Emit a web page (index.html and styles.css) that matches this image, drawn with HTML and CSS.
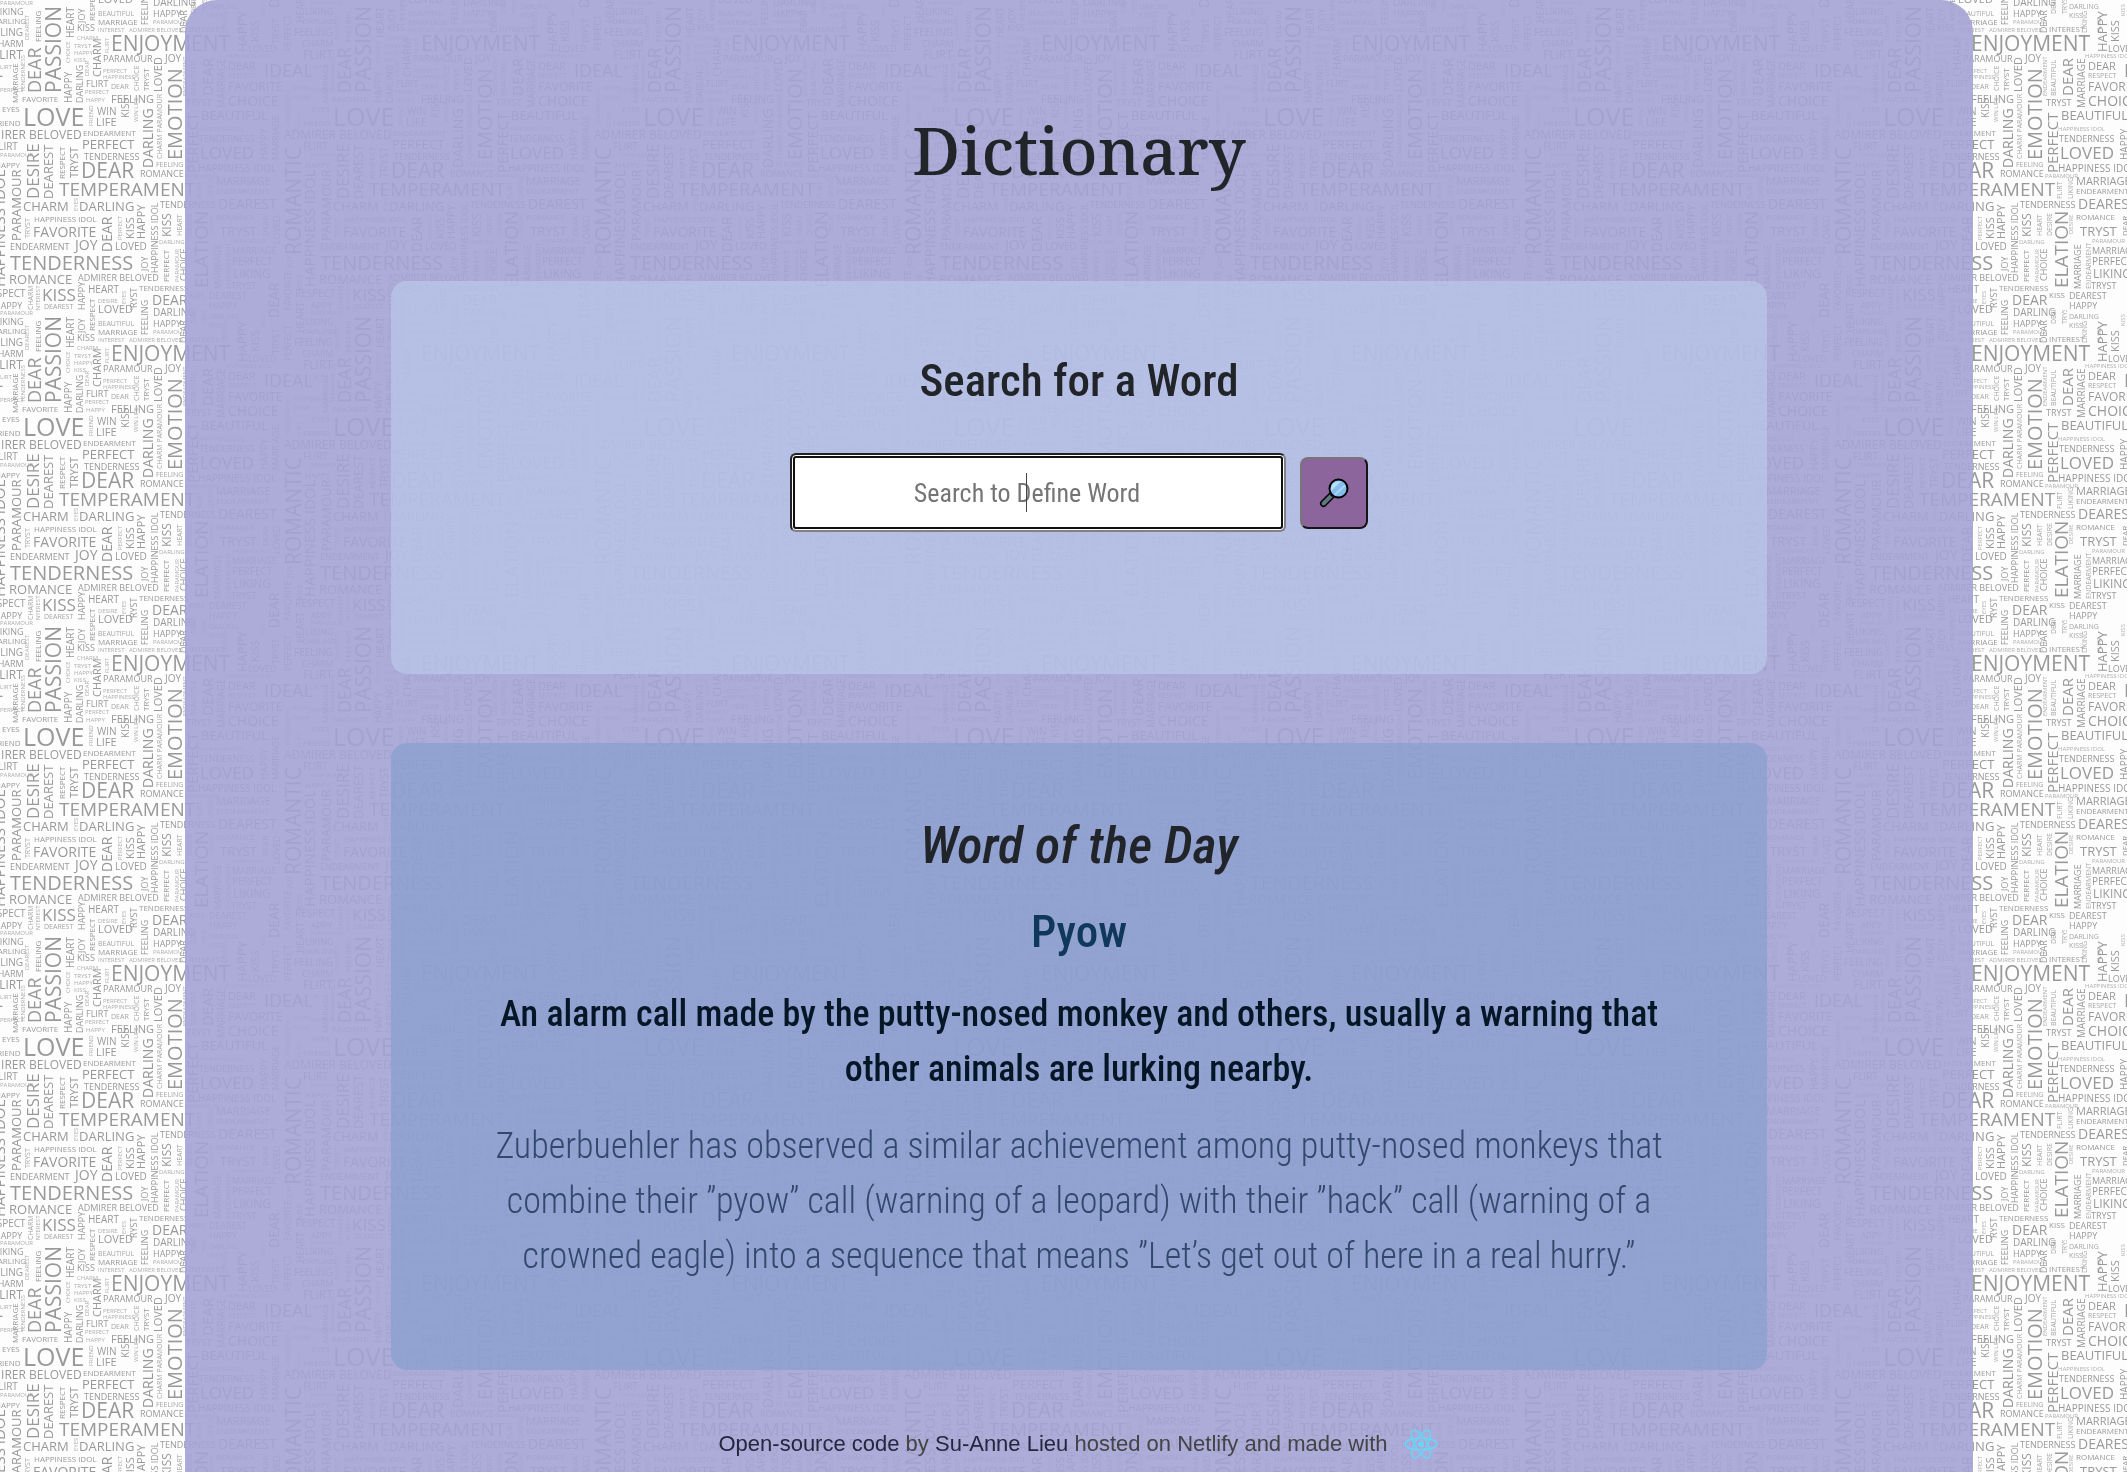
FILE: index.html
```html
<!DOCTYPE html>
<html lang="en">
<head>
<meta charset="utf-8">
<meta name="viewport" content="width=device-width, initial-scale=1">
<title>Dictionary</title>
<link rel="stylesheet" href="styles.css">
</head>
<body>
<svg class="wallpaper" aria-hidden="true">
<defs>
<pattern id="words" width="310" height="310" patternUnits="userSpaceOnUse">
<g font-size="25"><text x="23" y="126">LOVE</text></g>
<g font-size="21">
<text x="111" y="51">ENJOYMENT</text><text x="81" y="178">DEAR</text>
<text transform="translate(61 93) rotate(-90)">PASSION</text>
<text transform="translate(301 255) rotate(-90)">ROMANTIC</text>
</g>
<g font-size="20">
<text x="10" y="270">TENDERNESS</text>
<text transform="translate(182 160) rotate(-90)">EMOTION</text>
</g>
<g font-size="19">
<text x="59" y="196">TEMPERAMENT</text>
<text transform="translate(208 288) rotate(-90)">ELATION</text>
</g>
<g font-size="18">
<text x="264" y="77">IDEAL</text><text x="-46" y="77">IDEAL</text>
<text transform="translate(41 93) rotate(-90)">DEAR</text>
</g>
<g font-size="17">
<text x="200" y="159">LOVED</text><text x="42" y="301">KISS</text>
<text transform="translate(39 199) rotate(-90)">DESIRE</text>
</g>
<g font-size="15">
<text transform="translate(5 287) rotate(-90)">HAPPINESS IDOL</text>
<text transform="translate(315 287) rotate(-90)">HAPPINESS IDOL</text>
<text transform="translate(198 173) rotate(-90)">PERFECT</text>
<text transform="translate(213 96) rotate(-90)">DEAR</text>
</g>
<g font-size="14">
<text x="218" y="209">DEAREST</text><text x="228" y="106">CHOICE</text><text x="33" y="237">FAVORITE</text><text x="75" y="250">JOY</text><text x="152" y="305">DEAR</text>
<text transform="translate(153 168) rotate(-90)">DARLING</text>
<text transform="translate(112 252) rotate(-90)">DEAR</text>
<text transform="translate(279 318) rotate(-90)">DEAR</text><text transform="translate(279 8) rotate(-90)">DEAR</text>
</g>
<g font-size="13">
<text x="220" y="236">TRYST</text><text x="201" y="120">BEAUTIFUL</text><text x="23" y="211">CHARM</text><text x="79" y="211">DARLING</text><text x="9" y="284">ROMANCE</text><text x="82" y="149">PERFECT</text>
<text transform="translate(53 199) rotate(-90)">DEAREST</text>
<text transform="translate(21 241) rotate(-90)">PARAMOUR</text>
<text transform="translate(247 52) rotate(-90)">HAPPY</text>
</g>
<g font-size="12">
<text x="233" y="278">LIKING</text><text x="228" y="91">FAVORITE</text><text x="284" y="139">ADMIRER BELOVED</text><text x="-26" y="139">ADMIRER BELOVED</text><text x="303" y="59">FLIRT</text><text x="-7" y="59">FLIRT</text>
<text transform="translate(171 237) rotate(-90)">KISS</text>
</g>
<g font-size="11">
<text x="216" y="185">MARRIAGE</text><text x="111" y="103">FEELING</text><text x="96" y="126">LIFE</text><text x="98" y="3">LOVED</text><text x="98" y="313">LOVED</text><text x="228" y="70">DEAR</text>
<text transform="translate(78 178) rotate(-90)">TRYST</text>
<text transform="translate(259 42) rotate(-90)">KISS</text>
<text transform="translate(101 77) rotate(-90)">CHARM</text>
<text transform="translate(162 92) rotate(-90)">LOVED</text>
<text transform="translate(145 239) rotate(-90)">HAPPY</text>
<text transform="translate(134 239) rotate(-90)">KISS</text>
</g>
<g font-size="10">
<text x="115" y="250">LOVED</text><text x="97" y="115">WIN</text><text x="165" y="62">JOY</text><text x="153" y="6">DARLING</text><text x="153" y="316">DARLING</text><text x="294" y="36">FEELING</text><text x="-16" y="36">FEELING</text><text x="303" y="150">FLIRT</text><text x="-7" y="150">FLIRT</text><text x="-15" y="297">RESPECT</text><text x="295" y="297">RESPECT</text><text x="198" y="172">HAPPINESS IDOL</text><text x="88" y="293">HEART</text><text x="232" y="265">PERFECT</text>
<text transform="translate(225 108) rotate(-90)">MARRIAGE</text>
<text transform="translate(74 38) rotate(-90)">HEART</text>
<text transform="translate(72 103) rotate(-90)">HAPPY</text>
<text transform="translate(129 118) rotate(-90)">KISS</text>
<text transform="translate(268 160) rotate(-90)">HAPPY</text>
<text transform="translate(304 23) rotate(-90)">HEART</text><text transform="translate(304 333) rotate(-90)">HEART</text>
</g>
<g font-size="9">
<text x="10" y="250">ENDEARMENT</text><text x="78" y="281">ADMIRER BELOVED</text><text x="84" y="160">TENDERNESS</text><text x="140" y="177">ROMANCE</text><text x="86" y="87">FLIRT</text><text x="103" y="62">PARAMOUR</text><text x="77" y="31">KISS</text><text x="153" y="17">HAPPY</text><text x="248" y="52">LOVED</text><text x="302" y="47">CHARM</text><text x="-8" y="47">CHARM</text><text x="-5" y="15">LIKING</text><text x="305" y="15">LIKING</text><text x="186" y="106">TRYST</text><text x="199" y="142">TENDERNESS</text><text x="160" y="208">TENDERNESS</text><text x="232" y="254">MARRIAGE</text><text x="231" y="289">TRYST</text><text x="209" y="299">DEAREST</text><text x="209" y="309">HAPPY</text><text x="-6" y="309">HAPPY</text>
<text transform="translate(83 103) rotate(-90)">DARLING</text>
<text transform="translate(148 25) rotate(-90)">FEELING</text><text transform="translate(148 335) rotate(-90)">FEELING</text>
<text transform="translate(158 273) rotate(-90)">HAPPINESS IDOL</text>
<text transform="translate(148 271) rotate(-90)">JOY</text>
<text transform="translate(137 313) rotate(-90)">TRYST</text>
<text transform="translate(187 33) rotate(-90)">DEAR</text>
<text transform="translate(280 244) rotate(-90)">LOVED</text>
<text transform="translate(221 289) rotate(-90)">MARRIAGE</text>
<text transform="translate(279 160) rotate(-90)">MARRIAGE</text>
<text transform="translate(279 44) rotate(-90)">TRYST</text>
<text transform="translate(291 51) rotate(-90)">PERFECT</text>
<text transform="translate(291 311) rotate(-90)">FAVORITE</text>
<text transform="translate(187 281) rotate(-90)">CHOICE</text>
<text transform="translate(85 310) rotate(-90)">HAPPY</text>
<text transform="translate(85 23) rotate(-90)">JOY</text>
</g>
<g font-size="8">
<text x="34" y="222">HAPPINESS IDOL</text><text x="83" y="136">ENDEARMENT</text><text x="22" y="102">FAVORITE</text><text x="98" y="25">MARRIAGE</text><text x="189" y="32">INTEREST</text><text x="2" y="112">EYES</text><text x="-7" y="126">FRIEND</text><text x="303" y="126">FRIEND</text><text x="-5" y="168">HAPPY</text><text x="305" y="168">HAPPY</text><text x="216" y="194">ENDEARMENT</text><text x="216" y="220">ROMANCE</text><text x="139" y="291">TENDERNESS</text><text x="189" y="298">KISS</text><text x="-8" y="24">DARLING</text><text x="302" y="24">DARLING</text>
<text transform="translate(65 179) rotate(-90)">RESPECT</text>
<text transform="translate(41 42) rotate(-90)">FEELING</text>
<text transform="translate(149 91) rotate(-90)">TRYST</text>
<text transform="translate(169 282) rotate(-90)">PERFECT</text>
<text transform="translate(18 103) rotate(-90)">MARRIAGE</text>
<text transform="translate(95 331) rotate(-90)">RESPECT</text><text transform="translate(95 21) rotate(-90)">RESPECT</text>
<text transform="translate(268 236) rotate(-90)">DEAR</text>
<text transform="translate(302 290) rotate(-90)">KISS</text>
<text transform="translate(292 268) rotate(-90)">JOY</text>
</g>
<g font-size="7" opacity=".9">
<text x="156" y="167">FEELING</text><text x="98" y="16">BEAUTIFUL</text><text x="209" y="18">KISS</text><text x="209" y="9">DARLING</text><text x="44" y="309">DEAREST</text><text x="111" y="89">DEAR</text><text x="228" y="78">RESPECT</text>
<text transform="translate(139 91) rotate(-90)">CHOICE</text>
<text transform="translate(162 159) rotate(-90)">CHARM PARAMOUR</text>
<text transform="translate(182 236) rotate(-90)">HEART</text>
<text transform="translate(192 236) rotate(-90)">DESIRE</text>
<text transform="translate(30 238) rotate(-90)">TRYST</text>
<text transform="translate(33 310) rotate(-90)">CHARM</text>
<text transform="translate(231 289) rotate(-90)">ENDEARMENT</text>
<text transform="translate(202 199) rotate(-90)">FLIRT</text>
<text transform="translate(213 199) rotate(-90)">LIKING</text>
<text transform="translate(196 96) rotate(-90)">BEAUTIFUL</text>
<text transform="translate(196 14) rotate(-90)">DESIRE</text>
<text transform="translate(207 14) rotate(-90)">TRYST</text>
<text transform="translate(227 33) rotate(-90)">LIKING</text>
</g>
<g font-size="6" opacity=".8">
<text x="103" y="73">PERFECT</text><text x="103" y="79">HAPPINESS</text><text x="98" y="32">INTEREST</text><text x="129" y="32">ADMIRER BELOVED</text><text x="198" y="131">HAPPINESS IDOL</text><text x="159" y="244">DARLING</text><text x="98" y="303">DESIRE</text><text x="98" y="320">PARAMOUR</text><text x="77" y="40">CHARM</text><text x="74" y="48">TRYST</text><text x="74" y="55">HAPPY</text><text x="74" y="62">KISS</text><text x="85" y="94">PERFECT</text><text x="86" y="102">HAPPY</text><text x="153" y="24">PARAMOUR</text><text x="185" y="178">PARAMOUR</text><text x="225" y="58">HAPPINESS IDOL</text><text x="232" y="243">PARAMOUR</text><text x="0" y="69">LIRT</text><text x="0" y="92">PERFECT</text><text x="0" y="157">PARAMOUR</text><text x="293" y="90">RESPECT</text><text x="293" y="100">PERFECT</text><text x="0" y="5">PARAMOUR</text>
<text transform="translate(109 53) rotate(-90)">FLIRT</text>
<text transform="translate(29 40) rotate(-90)">DEAREST</text>
<text transform="translate(25 92) rotate(-90)">TENDERNESS</text>
<text transform="translate(70 63) rotate(-90)">CHOICE</text>
<text transform="translate(89 76) rotate(-90)">DEAR</text>
<text transform="translate(93 126) rotate(-90)">FRIEND</text>
<text transform="translate(138 122) rotate(-90)">WIN LIFE</text>
<text transform="translate(122 240) rotate(-90)">PERFECT</text>
<text transform="translate(40 312) rotate(-90)">INTEREST</text>
<text transform="translate(78 211) rotate(-90)">EYES</text>
<text transform="translate(126 304) rotate(-90)">EYES</text>
<text transform="translate(179 282) rotate(-90)">PARAMOUR</text>
<text transform="translate(187 96) rotate(-90)">ENDEARMENT</text>
<text transform="translate(213 234) rotate(-90)">DESIRE</text>
<text transform="translate(290 126) rotate(-90)">TENDERNESS</text>
<text transform="translate(301 127) rotate(-90)">FLIRT</text>
<text transform="translate(265 16) rotate(-90)">KISS</text>
<text transform="translate(241 32) rotate(-90)">FLIRT</text>
</g>
</pattern>
</defs>
<rect width="100%" height="100%" fill="url(#words)"/>
</svg>

<div class="page">
<header><h1>Dictionary</h1></header>
<main>
<section class="card card-search">
<form class="search">
<label class="search-title" for="word">Search for a Word</label>
<div class="search-row">
<div class="field">
<input id="word" class="search-input" type="search" placeholder="Search to Define Word" autocomplete="off">
<span class="caret"></span>
</div>
<button class="search-button" type="button" aria-label="Search">
<svg width="30" height="30" viewBox="0 0 30 30" aria-hidden="true">
<path d="M12.500 17.500 4.500 25.500" stroke="#000" stroke-width="7" stroke-linecap="round"/>
<path d="M12 18 4.500 25.500" stroke="#5f7580" stroke-width="4" stroke-linecap="round"/>
<path d="M16 14 12 18" stroke="#000" stroke-width="3"/>
<circle cx="19.500" cy="10.500" r="9" fill="#83beec" stroke="#000" stroke-width="2"/>
<path d="M12 13 22 3.500A8 8 0 0 0 12 13Z" fill="#b9def6"/>
<path d="M15.500 17 26 7.500" stroke="#a9d5f4" stroke-width="2"/>
</svg>
</button>
</div>
</form>
</section>
<section class="card card-day">
<h2>Word of the Day</h2>
<h3>Pyow</h3>
<p class="definition">An alarm call made by the putty-nosed monkey and others, usually a warning that other animals are lurking nearby.</p>
<p class="example">Zuberbuehler has observed a similar achievement among putty-nosed monkeys that combine their ”pyow” call (warning of a leopard) with their ”hack” call (warning of a crowned eagle) into a sequence that means ”Let’s get out of here in a real hurry.”</p>
</section>
</main>
<footer>
<span><a href="#">Open-source code</a> by <a href="#">Su-Anne Lieu</a> hosted on Netlify and made with</span>
<svg class="react" viewBox="-11.500 -10.500 23 21" aria-hidden="true">
<circle r="2" fill="#61dafb"/>
<g fill="none" stroke="#61dafb">
<ellipse rx="11" ry="4.200"/><ellipse rx="11" ry="4.200" transform="rotate(60)"/><ellipse rx="11" ry="4.200" transform="rotate(120)"/>
</g>
</svg>
</footer>
</div>
</body>
</html>
```
FILE: styles.css
```css
* { box-sizing: border-box; }

body {
  margin: 0;
  background: #fdfdfd;
  color: #212529;
  font-family: "Roboto Condensed", "Roboto", sans-serif;
}

.wallpaper {
  position: fixed;
  inset: 0;
  z-index: -1;
  width: 100%;
  height: 100%;
  fill: #999;
  font-family: "Open Sans", sans-serif;
}

.page {
  min-height: 100vh;
  margin: 0 154px 0 185px;
  padding: 98px 206px 10px;
  border-radius: 32px 32px 0 0;
  background: rgba(164, 162, 212, 0.9);
  text-align: center;
}

h1 {
  margin: 0 0 79px;
  font: 500 65px/104px "Noto Serif", "DejaVu Serif Condensed", serif;
}

.card {
  border-radius: 16px;
}

.card-search {
  margin-bottom: 69px;
  padding: 70px 80px 142px;
  background: rgba(188, 206, 236, 0.6);
}

.search-title {
  display: block;
  margin-bottom: 42px;
  font-size: 45px;
  font-weight: 500;
  line-height: 60px;
}

.search-row {
  display: flex;
  align-items: center;
  justify-content: center;
  gap: 14px;
}

.field { position: relative; }

.search-input {
  display: block;
  width: 496px;
  height: 79px;
  margin: 0;
  padding: 0 8px;
  border: 2px solid;
  border-color: #222 #858088 #858088 #222;
  border-radius: 6px;
  background: #fff;
  box-shadow: inset 0 0 0 1px #fff, inset 0 0 0 3px #101010;
  font: 26px/40px "Roboto Condensed", "Roboto", sans-serif;
  text-align: center;
  appearance: none;
}

.search-input::placeholder { color: #757575; opacity: 1; }

.caret {
  position: absolute;
  top: 20px;
  left: 236px;
  width: 1px;
  height: 39px;
  background: #444;
}

.search-button {
  display: flex;
  align-items: center;
  justify-content: center;
  width: 68px;
  height: 72px;
  padding: 0;
  border: 2px solid;
  border-color: #767676 #151515 #151515 #767676;
  border-radius: 8px;
  background: #8b659c;
}

.card-day {
  padding: 70px 80px 86px;
  background: rgba(128, 158, 206, 0.6);
}

h2 {
  margin: 0 0 21px;
  font-size: 52px;
  font-style: italic;
  font-weight: 500;
  line-height: 66px;
}

h3 {
  margin: 0 0 23px;
  color: #10375c;
  font-size: 45px;
  font-weight: 500;
  line-height: 64px;
}

p {
  margin: 0 0 22px;
  line-height: 55px;
}

.definition {
  color: #051626;
  font-size: 36px;
  font-weight: 500;
}

.example {
  margin: 0;
  color: #32496c;
  font-size: 36px;
  font-weight: 300;
}

footer {
  display: flex;
  align-items: center;
  justify-content: center;
  gap: 16px;
  margin-top: 58px;
  color: #444;
  font: 22px/32px "Liberation Sans", Arial, sans-serif;
}

footer a {
  color: #26263e;
  text-decoration: none;
}

.react { width: 36px; height: 30px; }
```
